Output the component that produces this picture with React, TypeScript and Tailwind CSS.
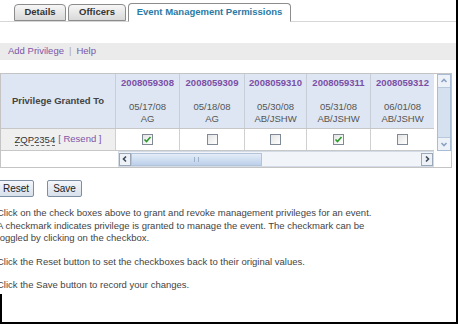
import React from 'react';

// ── Data ─────────────────────────────────────────────────────────────────────
const events = [
  { id: '2008059308', date: '05/17/08', code: 'AG', checked: true, w: 'w-[64px]' },
  { id: '2008059309', date: '05/18/08', code: 'AG', checked: false, w: 'w-[65px]' },
  { id: '2008059310', date: '05/30/08', code: 'AB/JSHW', checked: false, w: 'w-[62px]' },
  { id: '2008059311', date: '05/31/08', code: 'AB/JSHW', checked: true, w: 'w-[64px]' },
  { id: '2008059312', date: '06/01/08', code: 'AB/JSHW', checked: false, w: 'w-[63px]' },
];

const Tab: React.FC<{ label: string; active?: boolean; w: string }> = ({ label, active, w }) => (
  <div
    className={`${w} flex items-center justify-center rounded-t-[4px] border border-[#8c8c8c] font-bold text-[9.5px] ${
      active
        ? 'h-[19px] -mb-px bg-white border-b-white text-[#2b7aa6]'
        : 'h-[17px] bg-gradient-to-b from-[#f7f7f7] to-[#d9d9d9] text-[#333]'
    }`}
  >
    {label}
  </div>
);

const Checkbox: React.FC<{ checked: boolean }> = ({ checked }) => (
  <div className="w-[11px] h-[11px] border border-[#7f8a96] bg-gradient-to-br from-[#e4e4e4] to-white flex items-center justify-center">
    {checked && (
      <svg width="9" height="9" viewBox="0 0 9 9">
        <path d="M1.5 4.5 L3.5 6.5 L7.5 2" stroke="#2c9a2c" strokeWidth="1.6" fill="none" />
      </svg>
    )}
  </div>
);

const Arrow: React.FC<{ dir: 'left' | 'right' | 'up' | 'down' }> = ({ dir }) => {
  const d = {
    left: 'M5 1.5 L2.5 4 L5 6.5',
    right: 'M3 1.5 L5.5 4 L3 6.5',
    up: 'M1.5 5 L4 2.5 L6.5 5',
    down: 'M1.5 3 L4 5.5 L6.5 3',
  }[dir];
  return (
    <svg width="8" height="8" viewBox="0 0 8 8">
      <path d={d} stroke={dir === 'left' || dir === 'right' ? '#3b4a5c' : '#8aa2c2'} strokeWidth="1.6" fill="none" />
    </svg>
  );
};

const App: React.FC = () => {
  return (
    <div className="w-[458px] h-[326px] bg-white overflow-hidden font-['Liberation_Sans',Arial,sans-serif]">
      <div className="w-[458px] h-[324px] border-r-2 border-b-2 border-black flex flex-col">
        {/* ── Tabs ── */}
        <div className="flex items-end gap-[2px] pl-[14px] h-[22px] border-b border-[#d6d6d6]">
          <Tab label="Details" w="w-[52px]" />
          <Tab label="Officers" w="w-[58px]" />
          <Tab label="Event Management Permissions" w="w-[163px]" active />
        </div>

        {/* ── Action bar ── */}
        <div className="mt-[21px] h-[17px] bg-[#ebebeb] flex items-center pl-[8px] text-[9.5px] text-[#7b55a8]">
          <span>Add Privilege</span>
          <span className="mx-[5px] text-[#aaa]">|</span>
          <span>Help</span>
        </div>

        {/* ── Permissions grid ── */}
        <div className="mt-[13px] w-[452px] border border-[#c4c4c4] grid grid-cols-[433px_3px_14px] grid-rows-[77px_16px] text-[9.5px]">
          <div className="flex flex-col">
            {/* header */}
            <div className="flex h-[54px] bg-[#dde6f2]">
              <div className="w-[115px] shrink-0 flex items-center justify-center font-bold text-[#444] border-r border-[#c7ced8]">
                Privilege Granted To
              </div>
              {events.map(e => (
                <div key={e.id} className={`${e.w} shrink-0 flex flex-col items-center pt-[3px] border-r border-[#c7ced8] last:border-r-0`}>
                  <span className="font-bold text-[#7b4ea6] leading-[12px]">{e.id}</span>
                  <span className="mt-[12px] text-[#555] leading-[12px]">{e.date}</span>
                  <span className="text-[#555] leading-[12px]">{e.code}</span>
                </div>
              ))}
            </div>
            {/* body */}
            <div className="flex h-[23px] border-t border-[#c7c7c7] border-b">
              <div className="w-[115px] shrink-0 bg-[#efefef] flex items-center justify-center gap-[3px] border-r border-[#d0d0d0]">
                <span className="text-[#333] border-b border-dashed border-[#666] leading-[11px]">ZQP2354</span>
                <span className="text-[#7b55a8]">[ Resend ]</span>
              </div>
              {events.map(e => (
                <div key={e.id} className={`${e.w} shrink-0 flex items-center justify-center border-r border-[#d0d0d0] last:border-r-0`}>
                  <Checkbox checked={e.checked} />
                </div>
              ))}
            </div>
          </div>
          <div />
          {/* vertical scrollbar */}
          <div className="bg-[#d6e1f0] border border-[#a9bcd6] flex flex-col justify-between items-center">
            <div className="w-[12px] h-[13px] bg-[#edf2f9] border-b border-[#b8c8dd] flex items-center justify-center">
              <Arrow dir="up" />
            </div>
            <div className="w-[12px] h-[13px] bg-[#edf2f9] border-t border-[#b8c8dd] flex items-center justify-center">
              <Arrow dir="down" />
            </div>
          </div>
          {/* horizontal scrollbar */}
          <div className="flex pl-[117px]">
            <div className="flex-1 flex items-center bg-[#f1f5fa] border border-[#d3dbe6]">
              <div className="w-[12px] h-[13px] border border-[#9aa8b8] bg-[#eef2f7] flex items-center justify-center">
                <Arrow dir="left" />
              </div>
              <div className="w-[131px] h-[13px] bg-gradient-to-b from-[#e4edf8] to-[#bcd0ea] border border-[#b3c4da] flex items-center justify-center">
                <div className="w-[5px] h-[5px] border-x border-[#9fb2cb]" />
              </div>
              <div className="flex-1" />
              <div className="w-[12px] h-[13px] border border-[#9aa8b8] bg-[#eef2f7] flex items-center justify-center">
                <Arrow dir="right" />
              </div>
            </div>
          </div>
          <div />
          <div />
        </div>

        {/* ── Buttons ── */}
        <div className="mt-[12px] flex gap-[13px] -ml-[2px]">
          <button className="h-[17px] px-[4px] text-[10px] text-[#222] rounded-[2px] border border-[#7d8ea4] bg-gradient-to-b from-[#f4f7fb] to-[#d8e0ea]">
            Reset
          </button>
          <button className="h-[17px] px-[5px] text-[10px] text-[#222] rounded-[2px] border border-[#7d8ea4] bg-gradient-to-b from-[#f4f7fb] to-[#d8e0ea]">
            Save
          </button>
        </div>

        {/* ── Help text ── */}
        <div className="mt-[10px] -ml-[3px] text-[9.5px] leading-[12.5px] text-[#444] flex flex-col gap-[11px]">
          <p>
            Click on the check boxes above to grant and revoke management privileges for an event.
            <br />
            A checkmark indicates privilege is granted to manage the event. The checkmark can be
            <br />
            toggled by clicking on the checkbox.
          </p>
          <p>Click the Reset button to set the checkboxes back to their original values.</p>
          <p>Click the Save button to record your changes.</p>
        </div>
        <div className="flex-1 mt-[2px] border-l-2 border-black" />
      </div>
    </div>
  );
};

export default App;
